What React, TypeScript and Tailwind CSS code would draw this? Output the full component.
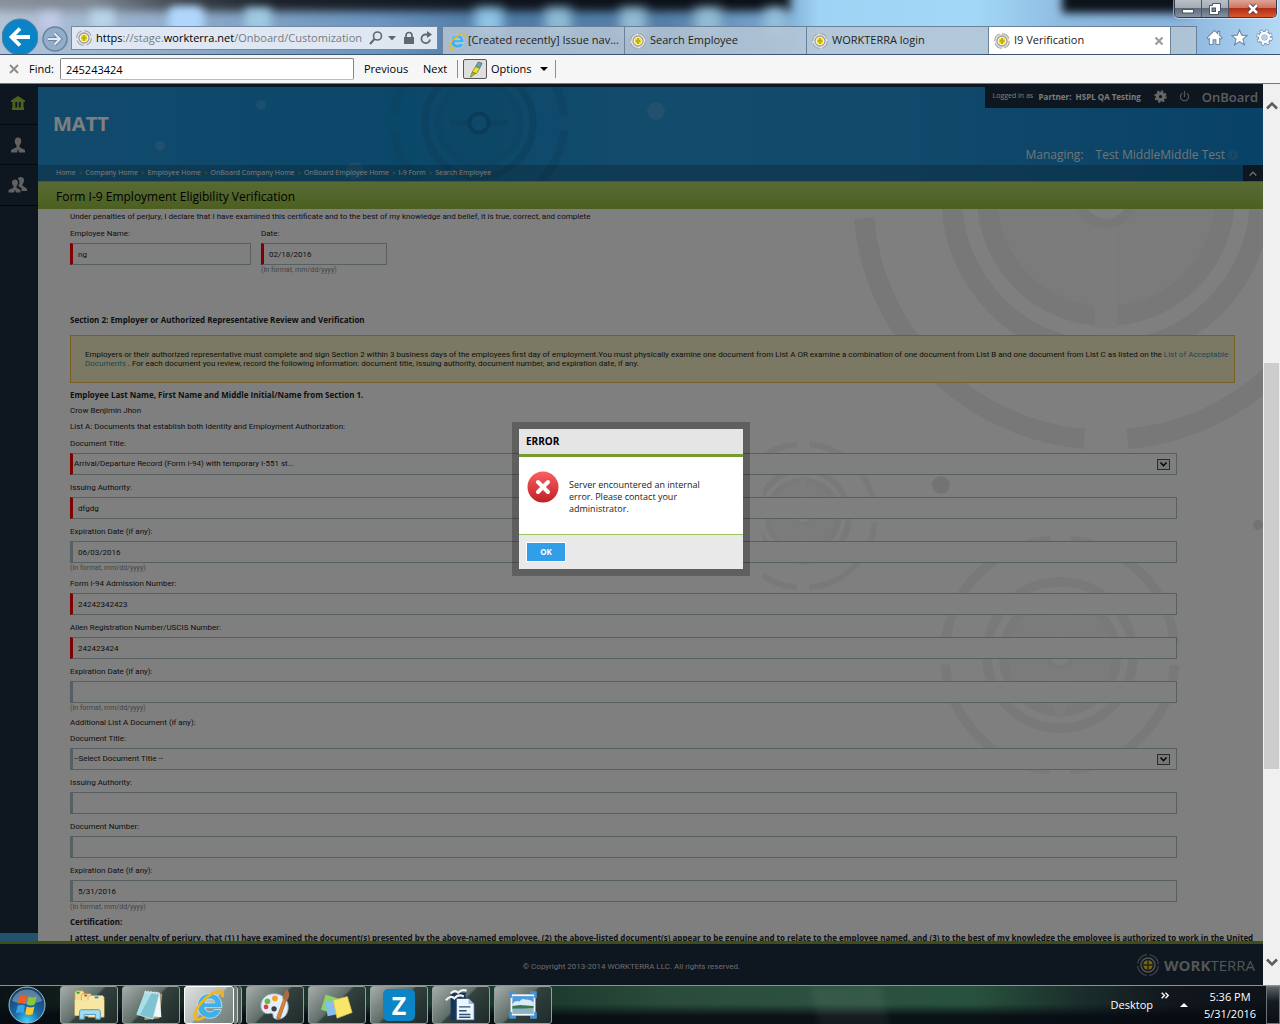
import React from "react";

const crumbs = ["Home", "Company Home", "Employee Home", "OnBoard Company Home", "OnBoard Employee Home", "I-9 Form", "Search Employee"];

function Favicon() {
  return (
    <svg viewBox="0 0 16 16" className="h-4 w-4 shrink-0" aria-hidden="true">
      <circle cx="8" cy="8" r="7.3" fill="#e8e8e8" stroke="#a4a4a4" strokeWidth="1.1" strokeDasharray="9 2.4" />
      <circle cx="8" cy="8" r="5" fill="#fff" stroke="#9b9ba3" strokeWidth="1.3" />
      <circle cx="8" cy="8" r="3.4" fill="#f2e21c" />
      <path d="M5.6 8h4.8M8 5v2M8 9v2" stroke="#8d7b10" strokeWidth="1" />
    </svg>
  );
}

function IeLogo({ className }: { className: string }) {
  return (
    <svg viewBox="0 0 32 32" className={className} aria-hidden="true">
      <path
        d="M28 18.500H12c.3 2.400 2.200 3.900 4.800 3.900 2 0 3.400-.8 4.200-2.100h6.500c-1.500 5.100-5.500 8.200-10.700 8.200-6.900 0-11.600-4.900-11.600-11.700S10 5.200 16.900 5.200c7.200 0 11.600 5.100 11.100 13.300zM12.200 14h9.400c-.3-2.200-2-3.700-4.600-3.700s-4.300 1.400-4.800 3.700z"
        fill="#3fb0ea"
        stroke="#c5e9fb"
        strokeWidth=".8"
      />
      <path d="M28.500 8.500c.8-2.600.4-4.600-1.300-5.300C23.500 1.700 14.500 7 8.400 14.200 3.200 20.500 1.400 27 4 29c1.600 1.200 4.800.3 8.400-2" fill="none" stroke="#f0b71c" strokeWidth="2.600" />
    </svg>
  );
}

function Target({ cx, cy, r, color, inner }: { cx: number; cy: number; r: number; color: string; inner: string }) {
  const outer = r * 0.96;
  const quarter = (outer * Math.PI) / 2;
  const gap = r * 0.17;
  return (
    <g fill="none" stroke={color} transform={`translate(${cx} ${cy})`}>
      <circle r={outer} strokeWidth={r * 0.08} strokeDasharray={`${quarter - gap} ${gap}`} strokeDashoffset={-gap / 2} />
      <circle r={r * 0.61} strokeWidth={r * 0.082} />
      <circle r={r * 0.43} fill={inner} stroke="none" />
      <circle r={r * 0.47} strokeWidth={r * 0.08} />
      <path d={`M0 ${r * 0.1}V${r * 0.52}M0 ${-r * 0.1}V${-r * 0.52}`} stroke="#f9f9f9" strokeWidth={r * 0.088} />
      <circle r={r * 0.105} fill="#fff" strokeWidth={r * 0.04} />
    </g>
  );
}

function BrowserTab({ title, ie, active }: { title: string; ie?: boolean; active?: boolean }) {
  return (
    <button
      type="button"
      className={
        "flex h-7 w-[182px] shrink-0 items-center border-l border-t border-[#6b8199] px-[5px] text-left text-[11px] text-[#222] " +
        (ie ? "gap-[2px] " : "gap-1 ") +
        (active ? "bg-white" : "bg-[#b5c6d5]/85")
      }
    >
      {ie ? <IeLogo className="h-[18px] w-[18px] shrink-0" /> : <Favicon />}
      <span className="grow whitespace-nowrap">{title}</span>
      {active && (
        <svg viewBox="0 0 10 10" className="mr-px h-[10px] w-[10px]" aria-hidden="true">
          <path d="M1.500 1.500l7 7M8.500 1.500l-7 7" stroke="#9a9a9a" strokeWidth="2" />
        </svg>
      )}
    </button>
  );
}

function Browser() {
  return (
    <header className="relative flex h-[55px] shrink-0 items-end overflow-hidden border-b border-[#3b5573] bg-[#5f89b2]">
      <div className="absolute inset-0 bg-[linear-gradient(90deg,#b4c4d6_0%,#9fb6cf_8%,#86a5c6_18%,#6a94bf_30%,#4f7ba6_38%,#557fa8_52%,#7ba8d0_61%,#9fd3f5_64%,#a3d8f8_76%,#8bb8dd_84%,#88b3dc_92%,#b5d9f5_100%)]" />
      <div className="absolute -top-3 left-[-20px] right-[490px] h-[23px] bg-[linear-gradient(90deg,#8b929c_0%,#7f8894_14%,#3c434c_25%,#1c222a_36%,#0d1219_70%,#0b0f15_100%)] blur-[5px]" />
      <div className="absolute -top-3 left-[1062px] h-[25px] w-[130px] bg-[#0d131b] blur-[4px]" />
      <div className="absolute left-[168px] top-[6px] h-7 w-[36px] rounded-lg bg-[#b0d7fb] blur-[4px]" />
      <div className="absolute left-[40px] top-[12px] h-5 w-[20px] bg-[#c3c8e6] blur-[5px]" />
      <div className="absolute left-[90px] top-[10px] h-5 w-[24px] bg-[#b9d4e6] blur-[5px]" />
      <div className="absolute left-[245px] top-[8px] h-6 w-[26px] bg-[#9fc9df] blur-[5px]" />
      <div className="absolute left-[475px] top-[8px] h-7 w-[28px] bg-[#8fc4e6] blur-[6px]" />
      <div className="absolute left-[545px] top-[8px] h-7 w-[26px] bg-[#8dbbd3] blur-[6px]" />
      <div className="absolute left-[620px] top-[8px] h-7 w-[26px] bg-[#93bbd2] blur-[6px]" />
      <div className="absolute left-[695px] top-[8px] h-7 w-[26px] bg-[#93bbd2] blur-[6px]" />
      <div className="absolute left-[765px] top-[8px] h-7 w-[20px] bg-[#93c0da] blur-[6px]" />

      <div className="absolute right-[3px] top-0 flex h-[18px] overflow-hidden rounded-b-[5px] border border-t-0 border-[#323c48] shadow-[0_0_0_1px_#ffffff80]">
        <button type="button" aria-label="Minimize" className="flex w-[27px] items-center justify-center border-r border-[#4a5563] bg-[linear-gradient(#b9bfc6_0%,#a4abb5_45%,#5d6877_50%,#8593a5_100%)]">
          <svg viewBox="0 0 12 12" className="h-3 w-3"><rect x="0.500" y="6.500" width="11" height="3.500" fill="#fff" stroke="#4a5463" /></svg>
        </button>
        <button type="button" aria-label="Restore" className="flex w-[27px] items-center justify-center border-r border-[#4a5563] bg-[linear-gradient(#b9bfc6_0%,#a4abb5_45%,#5d6877_50%,#8593a5_100%)]">
          <svg viewBox="0 0 12 12" className="h-3 w-3"><path d="M3.500.5h8v8h-2v3h-9v-9h3z" fill="#fff" stroke="#4a5463" /><rect x="3" y="5" width="3.500" height="3.500" fill="#7d8898" stroke="#4a5463" /></svg>
        </button>
        <button type="button" aria-label="Close" className="flex w-[47px] items-center justify-center bg-[linear-gradient(#dda496_0%,#cf7562_45%,#b22d15_50%,#d8582f_100%)]">
          <svg viewBox="0 0 12 12" className="h-3 w-3"><path d="M2 2l8 8M10 2l-8 8" stroke="#51323a" strokeWidth="4.400" /><path d="M2 2l8 8M10 2l-8 8" stroke="#fff" strokeWidth="2.600" /></svg>
        </button>
      </div>

      <div className="relative flex h-9 w-full items-end">
        <button type="button" aria-label="Back" className="ml-[2px] h-9 w-9 shrink-0">
          <svg viewBox="0 0 36 36" className="h-9 w-9"><circle cx="18" cy="19" r="18" fill="#0a84c6" stroke="#5c7d9c" /><path d="M28 19H10M18 10.500L9.500 19l8.500 8.500" fill="none" stroke="#fff" strokeWidth="3.800" /></svg>
        </button>
        <button type="button" aria-label="Forward" className="mb-[2px] ml-1 h-[26px] w-[26px] shrink-0">
          <svg viewBox="0 0 26 26" className="h-[26px] w-[26px]"><circle cx="13" cy="13" r="12" fill="#90adc9" stroke="#6a829c" strokeWidth="1.500" /><path d="M6 13h12M12.500 7.500L18 13l-5.500 5.500" fill="none" stroke="#6c849e" strokeWidth="4" /><path d="M6 13h12M12.500 7.500L18 13l-5.500 5.500" fill="none" stroke="#dfe9f3" strokeWidth="2.200" /></svg>
        </button>
        <div className="mb-1 ml-[3px] mr-1 flex h-6 min-w-0 flex-1 items-center gap-1 border border-[#7189a2] bg-[#dfe8f2] pl-1 pr-1">
          <Favicon />
          <div className="min-w-0 grow overflow-hidden whitespace-nowrap text-[11px] text-[#767b82]">
            <span className="text-black">https</span>://stage.<span className="text-black">workterra.net</span>/Onboard/Customization
          </div>
          <div className="flex shrink-0 items-center text-[#62676e]">
            <svg viewBox="0 0 14 14" className="h-[14px] w-[14px]"><circle cx="8.500" cy="5" r="4" fill="none" stroke="currentColor" strokeWidth="1.600" /><path d="M5.500 8L1 13" stroke="currentColor" strokeWidth="2" /></svg>
            <svg viewBox="0 0 8 5" className="ml-[5px] h-[5px] w-[8px]"><path d="M0 0h8L4 4.500z" fill="currentColor" /></svg>
            <svg viewBox="0 0 12 14" className="ml-[7px] h-[14px] w-[12px]"><path d="M1 6h10v7H1z" fill="currentColor" /><path d="M3 7V4.500a3 3 0 016 0V7" fill="none" stroke="currentColor" strokeWidth="1.700" /></svg>
            <svg viewBox="0 0 14 14" className="ml-1 h-[14px] w-[14px]"><path d="M11 8.500A4.300 4.300 0 117 3.500h2.500" fill="none" stroke="currentColor" strokeWidth="1.800" /><path d="M8 0l5 3.500L8 7z" fill="currentColor" /></svg>
          </div>
        </div>
        <BrowserTab title="[Created recently] Issue nav..." ie />
        <BrowserTab title="Search Employee" />
        <BrowserTab title="WORKTERRA login" />
        <BrowserTab title="I9 Verification" active />
        <button type="button" aria-label="New tab" className="h-7 w-[27px] shrink-0 border border-b-0 border-[#6b8199] bg-[#b5c6d5]/85" />
        <div className="mb-2 ml-[9px] mr-[7px] flex shrink-0 gap-2">
          <button type="button" aria-label="Home" className="h-[17px] w-[17px]">
            <svg viewBox="0 0 18 18"><path d="M9 1.500L1 9.500l1.500 1.200L3.500 10v6.500h4v-5h3v5h4V10l1 .7L17 9.500l-2.500-2.600V2.500h-2V5z" fill="#fff" stroke="#71879e" strokeWidth="1.100" /></svg>
          </button>
          <button type="button" aria-label="Favorites" className="h-[17px] w-[17px]">
            <svg viewBox="0 0 18 18"><path d="M9 .8l2.300 5.700 6 .3-4.700 3.900 1.600 6L9 13.400 3.800 16.700l1.600-6L.7 6.800l6-.3z" fill="#fff" stroke="#71879e" strokeWidth="1.100" /></svg>
          </button>
          <button type="button" aria-label="Tools" className="h-[17px] w-[17px]">
            <svg viewBox="-9 -9 18 18">
              <circle r="6.900" fill="none" stroke="#71879e" strokeWidth="3.600" strokeDasharray="3.100 2.320" />
              <circle r="5" fill="none" stroke="#71879e" strokeWidth="4.400" />
              <circle r="6.900" fill="none" stroke="#fff" strokeWidth="2.200" strokeDasharray="2.300 3.120" strokeDashoffset="-0.400" />
              <circle r="4.600" fill="none" stroke="#fff" strokeWidth="2.800" />
            </svg>
          </button>
        </div>
      </div>
    </header>
  );
}

function FindBar() {
  return (
    <form className="flex h-[29px] shrink-0 items-center border-b border-[#77787a] bg-[#f6f6f6] text-[11px] text-black" onSubmit={(e) => e.preventDefault()}>
      <button type="button" aria-label="Close find bar" className="ml-[9px] h-[10px] w-[10px]">
        <svg viewBox="0 0 10 10"><path d="M1 1l8 8M9 1l-8 8" stroke="#8b8b8b" strokeWidth="1.800" /></svg>
      </button>
      <label htmlFor="find" className="ml-[10px] w-[31px]">Find:</label>
      <input id="find" defaultValue="245243424" className="h-[22px] w-[294px] rounded-[2px] border border-[#858585] border-b-[#bdbdbd] bg-white px-[5px]" />
      <button type="button" className="ml-[10px] w-[59px] text-left">Previous</button>
      <button type="button" className="w-[34px] text-left">Next</button>
      <span className="mr-[5px] h-[18px] w-px bg-[#8e8e8e]" />
      <button type="button" aria-label="Highlight all matches" className="flex h-5 w-6 items-center justify-center rounded-[2px] border border-[#595959] bg-[#dedede]">
        <svg viewBox="0 0 18 18" className="h-[17px] w-[17px]">
          <path d="M12 1l4 1.500-2.500 5L9 6z" fill="#5ea7b4" stroke="#42635b" strokeWidth=".7" />
          <path d="M9 6l4.500 1.500-3.500 6-4.500-1.700z" fill="#efe32a" stroke="#75802c" strokeWidth=".8" />
          <path d="M5.500 11.800l3.500 1.500L5 16.500 3.500 17z" fill="#a9bb25" stroke="#6a7526" strokeWidth=".7" />
        </svg>
      </button>
      <button type="button" className="ml-1 flex items-center gap-2">
        Options
        <svg viewBox="0 0 8 4" className="h-1 w-2"><path d="M0 0h8L4 4z" /></svg>
      </button>
      <span className="ml-[7px] h-[18px] w-px bg-[#8e8e8e]" />
    </form>
  );
}

function Field({ id, label, value, required, hint, grow = "" }: { id: string; label: string; value?: string; required?: boolean; hint?: boolean; grow?: string }) {
  return (
    <div className={"flex flex-col pb-1 " + grow}>
      <label htmlFor={id} className="self-start leading-[18px]">{label}</label>
      <input
        id={id}
        defaultValue={value}
        className={"h-[22px] w-full border border-l-[3px] border-[#acc0c4] bg-white px-[5px] text-[#222] " + (required ? "border-l-[#ff0000]" : "")}
      />
      {hint && <span className="h-2 text-[7px] leading-[10px] text-[#8a8a8a]">(In format, mm/dd/yyyy)</span>}
    </div>
  );
}

function SelectField({ id, value, required }: { id: string; value: string; required?: boolean }) {
  return (
    <div className="flex flex-col pb-1">
      <label htmlFor={id} className="self-start leading-[18px]">Document Title:</label>
      <div className="relative">
        <select
          id={id}
          className={"block h-[22px] w-full appearance-none border border-l-[3px] border-[#acc0c4] bg-white px-px text-[#222] " + (required ? "border-l-[#ff0000]" : "")}
        >
          <option>{value}</option>
        </select>
        <svg viewBox="0 0 13 11" className="pointer-events-none absolute right-[7px] top-[6px] h-[11px] w-[13px]" aria-hidden="true">
          <rect x=".5" y=".5" width="12" height="10" fill="#eee" stroke="#555" />
          <path d="M3.500 3.500l3 3.200 3-3.200" fill="none" stroke="#000" strokeWidth="1.500" />
        </svg>
      </div>
    </div>
  );
}

function Sidebar() {
  return (
    <nav className="flex w-[38px] shrink-0 flex-col bg-[#1c2c3e] text-[#c2c2c2]">
      <a href="#home" aria-label="Home" className="flex h-[41px] w-[39px] items-center justify-center border-b border-[#060c14] pb-[3px] pr-[3px] text-[#9ec43a]">
        <svg viewBox="0 0 14 14" className="h-[14px] w-[14px]"><path d="M7 0L0 4.500V6h1.500v5.500H1V14h12v-2.500h-.5V6H14V4.500zM4.300 6h1.900v5.500H4.300zm3.500 0h1.900v5.500H7.800z" fill="currentColor" fillRule="evenodd" /></svg>
      </a>
      <a href="#employee" aria-label="Employee" className="flex h-10 w-[39px] items-center justify-center border-b border-[#060c14] pr-1">
        <svg viewBox="0 0 16 16" className="h-4 w-4"><path d="M8 .5C5.600.5 4.500 2.200 4.800 4.600c.2 1.700.7 3 1.700 3.800v1.800L1 13v2.500h6l1-3.500 1 3.500h6V13l-5.500-2.800V8.400c1-.8 1.500-2.100 1.700-3.800C11.500 2.200 10.400.5 8 .5z" fill="currentColor" /></svg>
      </a>
      <a href="#people" aria-label="People" className="flex h-[41px] w-[39px] items-center justify-center border-b border-[#060c14] pr-1">
        <svg viewBox="0 0 20 16" className="h-4 w-5"><path d="M12.500 0c-1.500 0-2.500.8-2.800 2 1.500.8 2 2.500 1.700 4.200-.2 1.300-.6 2-1.200 2.700l3.300 2.300V14H19v-2.300l-4.500-3V7.200C15.500 6 16 4.800 16 3.200 16 1.200 14.500 0 12.500 0z" fill="currentColor" /><path d="M7 2.500C5 2.500 3.800 4 4 6c.2 1.400.7 2.500 1.500 3.200v1.500L.5 13v2.500h5.500l1-2.700 1 2.700h4.500V13L8.500 10.700V9.200C9.300 8.500 9.800 7.400 10 6c.2-2-1-3.500-3-3.500z" fill="currentColor" /></svg>
      </a>
      <div className="mt-auto h-2 bg-[#3ea6dc]" />
    </nav>
  );
}

function Banner() {
  return (
    <div className="relative shrink-0 bg-[linear-gradient(90deg,#2394d8_0%,#1590d4_30%,#2696d8_50%,#2494d8_68%,#1084cc_100%)] text-[#f4f4f4]">
      <svg className="absolute inset-0 h-full w-full" aria-hidden="true">
        <g fill="none" stroke="#1a84c0">
          <circle cx="441" cy="36" r="85" strokeWidth="8" strokeDasharray="118 15.500" strokeDashoffset="-8" opacity=".6" />
          <circle cx="441" cy="36" r="54" strokeWidth="7" />
          <circle cx="441" cy="36" r="41" strokeWidth="7" fill="#1c8cca" opacity=".5" />
          <path d="M413 36h57" strokeWidth="6" />
          <circle cx="441" cy="36" r="9.500" strokeWidth="4" fill="#1d92d4" stroke="#167ab4" />
        </g>
        <g fill="#fff" opacity=".12">
          <circle cx="122" cy="59" r="5" /><circle cx="223" cy="18" r="5" /><circle cx="618" cy="24" r="9" /><circle cx="317" cy="84" r="9" />
        </g>
      </svg>
      <div className="relative flex h-[78px] justify-between">
        <h1 className="ml-[15px] mt-[23px] text-[20px] font-bold leading-7 text-white">MATT</h1>
        <div className="flex flex-col items-end justify-between">
          <div className="flex h-[21px] items-center bg-[#1c2c3e] pb-[2px] pl-2 pr-[5px] text-[8px]">
            <span className="w-[46px] whitespace-nowrap text-[7px]">Logged in as</span>
            <b>Partner: &nbsp;HSPL QA Testing</b>
            <button type="button" aria-label="Settings" className="ml-[13px]">
              <svg viewBox="-7 -7 14 14" className="h-[13px] w-[13px]"><circle r="3.500" fill="none" stroke="#ccc" strokeWidth="3.500" /><circle r="5.500" fill="none" stroke="#ccc" strokeWidth="2.400" strokeDasharray="2.200 2.120" /></svg>
            </button>
            <button type="button" aria-label="Log out" className="ml-3">
              <svg viewBox="0 0 12 12" className="h-[11px] w-[11px]"><path d="M3.500 2.500a4.500 4.500 0 105 0M6 0v6.500" fill="none" stroke="#aaa" strokeWidth="1.300" /></svg>
            </button>
            <strong className="ml-3 text-[13px] font-semibold leading-4 text-[#b8bcc0]">OnBoard</strong>
          </div>
          <div className="mr-[25px] flex items-center text-[12px] leading-5 text-[#dfe8ee]">
            <span className="mr-3">Managing:</span>
            <span>Test MiddleMiddle Test</span>
            <span className="ml-[3px] flex h-[10px] w-[10px] items-center justify-center rounded-full bg-[#2c92d0] font-['Liberation_Serif',serif] text-[8px] italic text-[#1566a0]">i</span>
          </div>
        </div>
      </div>
      <div className="relative flex h-4 items-center justify-between bg-[#1a1a1a]/25">
        <nav className="ml-[18px] flex whitespace-nowrap text-[7px]">
          {crumbs.map((c, i) => (
            <span key={c}>
              <a href="#crumb">{c}</a>
              {i < crumbs.length - 1 && <span className="mx-[3px] text-[#8ab04a]">»</span>}
            </span>
          ))}
        </nav>
        <button type="button" aria-label="Collapse header" className="flex h-4 w-5 items-center justify-center bg-[#1c2c3e]">
          <svg viewBox="0 0 8 5" className="h-[5px] w-2"><path d="M.7 4.500L4 1l3.300 3.500" fill="none" stroke="#eee" strokeWidth="1.200" /></svg>
        </button>
      </div>
      <h2 className="relative h-7 border-t border-[#90b04e] bg-[linear-gradient(#b0d46a,#98c040)] pl-[18px] text-[12px] font-normal leading-[29px] text-black">
        Form I-9 Employment Eligibility Verification
      </h2>
    </div>
  );
}

function I9Form() {
  return (
    <main className="relative min-h-0 flex-1 overflow-hidden bg-white font-['Roboto','Liberation_Sans',sans-serif] text-[8px] text-[#222]">
      <svg className="absolute right-0 top-0 h-[600px] w-[500px]" viewBox="0 0 500 600" aria-hidden="true">
        <Target cx={343} cy={-12} r={253} color="#f1f1f1" inner="#f6f6f6" />
        <Target cx={297} cy={446} r={120} color="#f3f3f3" inner="#f6f6f6" />
        <Target cx={40} cy={307} r={75} color="#f3f3f3" inner="#f6f6f6" />
        <circle cx="178" cy="276" r="9" fill="#e6e6e6" />
        <circle cx="495" cy="316" r="5" fill="#e6e6e6" />
      </svg>
      <form className="relative pl-8 pr-7" onSubmit={(e) => e.preventDefault()}>
        <p className="leading-4">Under penalties of perjury, I declare that I have examined this certificate and to the best of my knowledge and belief, it is true, correct, and complete</p>
        <div className="flex gap-[10px]">
          <Field id="name" label="Employee Name:" value="ng" required grow="w-[181px]" />
          <Field id="date" label="Date:" value="02/18/2016" required hint grow="w-[126px]" />
        </div>
        <h3 className="mt-[35px] font-['Open_Sans',sans-serif] font-bold leading-4">Section 2: Employer or Authorized Representative Review and Verification</h3>
        <div className="mb-1 mt-[7px] border border-[#f0c240] bg-[#f6f2c6] py-[14px] pl-[14px] pr-[2px] leading-[9px]">
          Employers or their authorized representative must complete and sign Section 2 within 3 business days of the employees first day of employment.You must physically examine one document from List A OR examine a combination of one document from List B and one document from List C as listed on the <a href="#list" className="text-[#3a8fb8]">List of Acceptable Documents</a> . For each document you review, record the following information: document title, issuing authority, document number, and expiration date, if any.
        </div>
        <h3 className="font-['Open_Sans',sans-serif] font-bold leading-4">Employee Last Name, First Name and Middle Initial/Name from Section 1.</h3>
        <p className="leading-4">Crow Benjimin Jhon</p>
        <p className="leading-4">List A: Documents that establish both Identity and Employment Authorization:</p>
        <div className="mr-[58px]">
          <SelectField id="doc1" value="Arrival/Departure Record (Form I-94) with temporary I-551 st..." required />
          <Field id="auth1" label="Issuing Authority:" value="dfgdg" required />
          <Field id="exp1" label="Expiration Date (if any):" value="06/03/2016" hint />
          <Field id="i94" label="Form I-94 Admission Number:" value="24242342423" required />
          <Field id="alien" label="Alien Registration Number/USCIS Number:" value="242423424" required />
          <Field id="exp2" label="Expiration Date (if any):" hint />
          <p className="leading-[15px]">Additional List A Document (if any):</p>
          <SelectField id="doc2" value="--Select Document Title --" />
          <Field id="auth2" label="Issuing Authority:" />
          <Field id="docnum" label="Document Number:" />
          <Field id="exp3" label="Expiration Date (if any):" value="5/31/2016" hint />
        </div>
        <div className="whitespace-nowrap font-['Open_Sans',sans-serif] font-bold leading-4">
          <h3>Certification:</h3>
          <p>I attest, under penalty of perjury, that (1) I have examined the document(s) presented by the above-named employee, (2) the above-listed document(s) appear to be genuine and to relate to the employee named, and (3) to the best of my knowledge the employee is authorized to work in the United</p>
        </div>
      </form>
    </main>
  );
}

function PageFooter() {
  return (
    <footer className="grid h-11 shrink-0 grid-cols-[1fr_auto_1fr] items-center border-t-[3px] border-[#7a9c2e] bg-[#1c2c3e] text-[#d8d8d8]">
      <span />
      <p className="mt-1 font-['Roboto','Liberation_Sans',sans-serif] text-[8px]">© Copyright 2013-2014 WORKTERRA LLC. All rights reserved.</p>
      <div className="mr-2 flex items-center justify-end gap-1 text-[15px] leading-5 text-[#a8abad]">
        <svg viewBox="-12 -12 24 24" className="h-6 w-6" fill="none" aria-hidden="true">
          <circle r="10.500" stroke="#777d84" strokeWidth="1.400" strokeDasharray="14 2.500" strokeDashoffset="-1.200" />
          <circle r="7" stroke="#a0a4a8" strokeWidth="1.500" />
          <circle r="4.800" fill="#e8d320" />
          <path d="M0-5V5M-5 0h10" stroke="#4a4720" strokeWidth="1.400" />
        </svg>
        <span><b>WORK</b>TERRA</span>
      </div>
    </footer>
  );
}

function ErrorDialog() {
  return (
    <div className="absolute inset-0 flex items-center justify-center bg-black/50 pb-[71px] pr-px">
      <div role="alertdialog" aria-labelledby="dlg-title" aria-describedby="dlg-text" className="w-[238px] border-[7px] border-black/25 bg-clip-padding">
        <h2 id="dlg-title" className="border-b-[3px] border-[#799a2e] bg-[#e5e5e5] pl-[7px] text-[10px] font-bold leading-[25px] text-black">ERROR</h2>
        <div className="flex h-[77px] gap-[10px] bg-white pl-2">
          <svg viewBox="0 0 32 32" className="mt-[14px] h-8 w-8 shrink-0" aria-hidden="true">
            <defs><linearGradient id="red" x2="0" y2="1"><stop stopColor="#fb5f61" /><stop offset="1" stopColor="#bd2227" /></linearGradient></defs>
            <circle cx="16" cy="16" r="15.500" fill="url(#red)" />
            <path d="M11 11l10 10M21 11L11 21" stroke="#fff" strokeWidth="4" strokeLinecap="round" />
          </svg>
          <p id="dlg-text" className="mt-[22px] w-[142px] text-[9px] leading-[12px] text-[#222]">Server encountered an internal error. Please contact your administrator.</p>
        </div>
        <div className="border-t border-[#9cc35c] bg-[#e9e9e9] p-[7px]">
          <button type="button" className="block h-5 w-10 border border-white bg-[#319ee8] text-[8px] font-bold text-white">OK</button>
        </div>
      </div>
    </div>
  );
}

function ScrollBar() {
  return (
    <div className="flex w-[17px] shrink-0 flex-col items-center bg-[#f0f0f0]" aria-hidden="true">
      <svg viewBox="0 0 12 9" className="mt-[17px] h-[9px] w-3"><path d="M1 7.500L6 2.500l5 5" fill="none" stroke="#5c5c5c" strokeWidth="2.600" /></svg>
      <div className="flex min-h-0 w-full flex-1 flex-col items-center">
        <div className="flex-[253]" />
        <div className="w-[15px] flex-[406] bg-[#cdcdcd]" />
        <div className="flex-[189]" />
      </div>
      <svg viewBox="0 0 12 9" className="mb-[18px] h-[9px] w-3"><path d="M1 1.500l5 5 5-5" fill="none" stroke="#5c5c5c" strokeWidth="2.600" /></svg>
    </div>
  );
}

const appIcons: { name: string; icon: React.ReactNode }[] = [
  {
    name: "Windows Explorer",
    icon: (
      <svg viewBox="0 0 36 36" className="h-[34px] w-[34px]">
        <path d="M3 5l1.500-2h7L13 5v24H3z" fill="#f3dc8a" stroke="#b59a4a" strokeWidth=".7" /><path d="M10 8l1.500-2h8L21 8v22H10z" fill="#f7e49c" stroke="#b59a4a" strokeWidth=".7" />
        <path d="M17 10l1.500-2h14L34 10v21H17z" fill="#f9ebae" stroke="#b59a4a" strokeWidth=".7" /><path d="M3 13h31v16H3z" fill="#f8e7a2" />
        <rect x="5" y="4" width="3" height="2" fill="#24a33c" /><rect x="13" y="7" width="3" height="2" fill="#e2462c" /><rect x="24" y="9" width="4" height="2" fill="#2f86d8" />
        <path d="M8 33v-8q0-2 2-2h18q2 0 2 2v8h-5v-5H13v5z" fill="#a5daf1" stroke="#4b98c2" strokeWidth="1" />
      </svg>
    ),
  },
  {
    name: "Notepad",
    icon: (
      <svg viewBox="0 0 36 36" className="h-[34px] w-[34px]">
        <path d="M13 5l17 1-3 26-16 2z" fill="#a99a78" /><path d="M12 4l15 1 2 26-10-1z" fill="#f2f7fa" />
        <path d="M12 4l15 1.500-7 27.500L3 28z" fill="#7fc2d1" stroke="#d5eef4" strokeWidth=".8" /><path d="M12 4l7 .8L6 28.800 3 28z" fill="#a9dfe9" />
        <path d="M12 3v3M15 3v3M18 3.300v3M21 3.600v3M24 4v3" stroke="#e5e5e5" strokeWidth="1.300" />
      </svg>
    ),
  },
  { name: "Internet Explorer", icon: <IeLogo className="h-[34px] w-[34px]" /> },
  {
    name: "Paint",
    icon: (
      <svg viewBox="0 0 36 36" className="h-[34px] w-[34px]">
        <path d="M17 6C8 6 3 12 3 19c0 6 5 9 9 8 3-1 4 0 4 3 0 2 2 3 5 3 7 0 11-6 11-13 0-8-6-14-15-14z" fill="#e4eef8" stroke="#8ba6c6" />
        <circle cx="10" cy="14" r="3" fill="#68b942" /><circle cx="18" cy="11" r="3" fill="#f0a324" /><circle cx="8.500" cy="20" r="2.500" fill="#e04032" /><circle cx="17" cy="22" r="2.800" fill="#384048" />
        <path d="M27 12l3 1-7 20q-2 1-3-2z" fill="#d98535" stroke="#8f4f1a" strokeWidth=".6" /><path d="M26 12q0-6 5-11 4 6 0 12z" fill="#a96c41" />
      </svg>
    ),
  },
  {
    name: "Sticky Notes",
    icon: (
      <svg viewBox="0 0 36 36" className="h-[34px] w-[34px]">
        <path d="M6 7l13 4-4 16L1 23z" fill="#8ed06a" /><path d="M6 15l13-3 3 15-14 3z" fill="#85bff0" /><path d="M14 13l15-4 5 17-16 6z" fill="#f8e56a" stroke="#d9c23f" strokeWidth=".7" />
      </svg>
    ),
  },
  {
    name: "Zoho",
    icon: <span className="flex h-8 w-8 items-center justify-center rounded-[5px] bg-[#0c85c7] text-[25px] font-bold leading-none text-white">Z</span>,
  },
  {
    name: "OpenOffice Writer",
    icon: (
      <svg viewBox="0 0 36 36" className="h-[34px] w-[34px]">
        <path d="M7 5h16v29H7z" fill="#15345a" /><path d="M13 11h13l6 6v17H13z" fill="#eef4fa" stroke="#2d5078" />
        <path d="M26 11l6 6h-6z" fill="#9fb9d4" /><path d="M16 20h12M16 24h8M16 28h12M16 31h12" stroke="#2d5078" strokeWidth="1.500" />
        <path d="M2 13q5-6 9-2 4-5 10-2M7 6q4-5 8-1 4-4 9-2" fill="none" stroke="#f2f2f2" strokeWidth="2.300" />
      </svg>
    ),
  },
  {
    name: "Snipping Tool",
    icon: (
      <svg viewBox="0 0 36 36" className="h-8 w-8">
        <rect x="4" y="6" width="28" height="24" fill="#f4f8fb" /><rect x="6" y="8" width="24" height="11" fill="#4f9be0" /><path d="M6 17q3-5 8-3 3-4 7-2 4-1 9 3v4H6z" fill="#d9ecf9" />
        <path d="M6 19l9-1 15 1v3l-24 1z" fill="#3f7350" /><rect x="6" y="22" width="24" height="6" fill="#8db4c4" />
        <path d="M4 10V4h6M26 4h6v6M32 26v6h-6M10 32H4v-6" fill="none" stroke="#4792d6" strokeWidth="3" />
      </svg>
    ),
  },
];

function Taskbar() {
  return (
    <footer className="relative flex h-[39px] shrink-0 items-center overflow-hidden border-t border-[#8b9490] bg-[linear-gradient(90deg,#0a1414_0%,#132320_8%,#1e3b33_30%,#1c382d_42%,#2a4c3a_52%,#2c5040_62%,#28523d_76%,#1b2f2c_84%,#11151c_92%,#0d1118_100%)] text-[11px] text-white">
      <div className="absolute inset-x-0 bottom-0 h-5 bg-[linear-gradient(transparent,#060b12e6_60%)]" />
      <div className="absolute left-[815px] top-0 h-10 w-[70px] skew-x-12 bg-white/5 blur-[3px]" />
      <button type="button" aria-label="Start" className="relative ml-2 h-[38px] w-[38px] shrink-0">
        <svg viewBox="0 0 38 38">
          <defs><radialGradient id="orb" cx=".5" cy=".95" r=".9"><stop stopColor="#3fd3fb" /><stop offset=".4" stopColor="#1a6ca8" /><stop offset="1" stopColor="#173e66" /></radialGradient></defs>
          <circle cx="19" cy="19" r="18" fill="url(#orb)" stroke="#a3bed0" strokeWidth="1" />
          <path d="M4 15A15.500 15.500 0 0134 15q-15 6-30 0z" fill="#fff" opacity=".3" />
          <path d="M11.500 10q4-2.500 7.500 0l-1.700 8q-4-2-7.500 0z" fill="#ef5a25" /><path d="M20.500 10.500q4 2 8 0l-1.800 8q-4 2-7.700 0z" fill="#8cc63c" />
          <path d="M9.500 20q4-2.500 7.500 0l-1.700 7.500q-4-2-7.500 0z" fill="#39a3e8" /><path d="M18.700 20.500q4 2 7.800 0L24.700 28q-4 2-7.500 0z" fill="#fcc82d" />
        </svg>
      </button>
      <div className="relative ml-[14px] flex gap-1">
        {appIcons.map((a, i) => (
          <div key={a.name} className="flex w-[58px]">
            <button
              type="button"
              aria-label={a.name}
              className={
                "flex h-[38px] min-w-0 flex-1 items-center justify-center rounded-[3px] border " +
                (i === 2
                  ? "border-white bg-[linear-gradient(135deg,#dfe3e2_0%,#b3bab8_50%,#8f9896_52%,#737f7c_100%)]"
                  : "border-[#959e9b] bg-[linear-gradient(135deg,#a6adab_0%,#5f6d69_46%,#33423e_50%,#1d2a29_100%)]")
              }
            >
              {a.icon}
            </button>
            {i === 2 && (
              <>
                <span className="h-[38px] w-1 rounded-r border-r border-[#c8cecb] bg-[#6f7a77]" />
                <span className="h-[38px] w-1 rounded-r border-r border-[#a4adaa] bg-[#4c5855]" />
              </>
            )}
          </div>
        ))}
      </div>
      <div className="relative ml-auto flex h-full items-center">
        <span>Desktop</span>
        <button type="button" aria-label="More" className="mb-5 ml-2 h-2 w-2">
          <svg viewBox="0 0 8 7"><path d="M.7.7L3.500 3.500.7 6.300M4.500.7l2.800 2.800-2.800 2.800" fill="none" stroke="#fff" strokeWidth="1.400" /></svg>
        </button>
        <button type="button" aria-label="Show hidden icons" className="ml-[11px] h-1 w-2">
          <svg viewBox="0 0 8 4"><path d="M0 4h8L4 0z" fill="#fff" /></svg>
        </button>
        <div className="ml-[11px] mr-[5px] w-[62px] text-center leading-[17px]">
          <div>5:36 PM</div>
          <div>5/31/2016</div>
        </div>
        <button type="button" aria-label="Show desktop" className="h-[38px] w-[14px] border border-[#6d7577] bg-[linear-gradient(#5a6366,#151b22_40%,#0b0f15)]" />
      </div>
    </footer>
  );
}

export default function App() {
  return (
    <div className="flex h-screen flex-col overflow-hidden font-['Open_Sans','Noto_Sans',sans-serif]">
      <Browser />
      <FindBar />
      <div className="flex min-h-0 flex-1">
        <div className="relative flex min-w-0 flex-1 flex-col">
          <div className="flex min-h-0 flex-1">
            <Sidebar />
            <div className="flex min-w-0 flex-1 flex-col border-t-[3px] border-[#1c2c3e]">
              <Banner />
              <I9Form />
            </div>
          </div>
          <PageFooter />
          <ErrorDialog />
        </div>
        <ScrollBar />
      </div>
      <Taskbar />
    </div>
  );
}
